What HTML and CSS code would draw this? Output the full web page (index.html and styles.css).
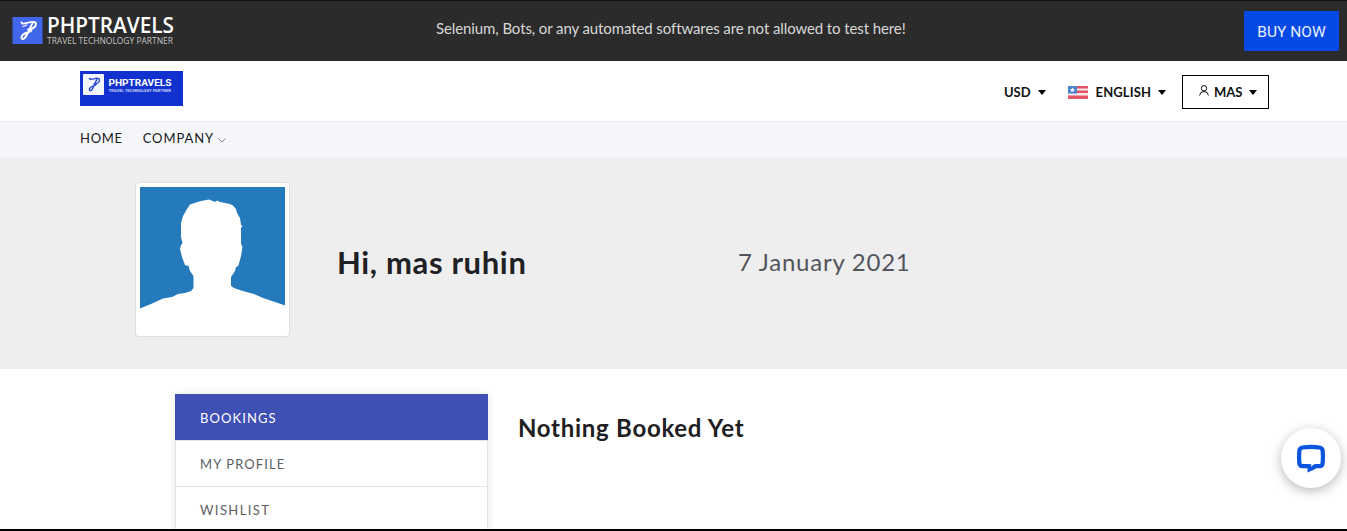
FILE: index.html
```html
<!DOCTYPE html>
<html lang="en">
<head>
<meta charset="utf-8">
<title>PHPTRAVELS - My Account</title>
<link rel="stylesheet" href="styles.css">
</head>
<body>
<div class="page">
  <div class="promo">
    <svg class="promo-logo" width="166" height="32" viewBox="0 0 166 32">
      <rect x="0.5" y="3" width="30" height="27" fill="#4267ec"/>
      <g fill="none" stroke="#fff" stroke-linecap="round" stroke-linejoin="round">
        <path stroke-width="1.900" d="M9.500 8.500C10 10.500 13 9.500 16 8.700C20 7.500 24 7.500 24 10C24 13 20 15.500 16 15.500"/>
        <path stroke-width="1.900" d="M20.500 9.500C18 13.500 17 17 15 20.500C13 24.500 11 26 9.800 24.500C8.500 22.500 11 20 14 19C17 18 18.500 18 19.500 16.500"/>
        <path stroke-width="1.200" d="M11 12.500L15 11"/>
      </g>
      <text class="logo-name" x="35" y="19" textLength="127" lengthAdjust="spacingAndGlyphs">PHPTRAVELS</text>
      <text class="logo-sub" x="35" y="29.500" textLength="126" lengthAdjust="spacingAndGlyphs">TRAVEL TECHNOLOGY PARTNER</text>
    </svg>
    <p class="promo-text">Selenium, Bots, or any automated softwares are not allowed to test here!</p>
    <a class="buy">BUY NOW</a>
  </div>

  <header class="header">
    <svg class="brand" width="103" height="35" viewBox="0 0 103 35">
      <rect width="103" height="35" fill="#1232cf"/>
      <rect x="3" y="3" width="21" height="21" rx="1" fill="#f3f6ff"/>
      <g fill="none" stroke="#2b49cc" stroke-width="1.400" stroke-linecap="round" stroke-linejoin="round">
        <path d="M9.500 7.500C10 9 12 8.300 14.500 7.700C17 7 19.700 7.200 19.500 9C19.300 11.200 17 12.800 14 12.900"/>
        <path d="M17 8.500C15 11.500 14.500 14 13.300 16.200C12 19 10.500 20.300 9.600 19.200C8.700 17.800 10.500 16 12.500 15.300C14.500 14.600 15.500 14.600 16 13.500"/>
      </g>
      <text class="brand-name" x="28.500" y="14.500" textLength="63" lengthAdjust="spacingAndGlyphs">PHPTRAVELS</text>
      <text class="brand-sub" x="28.500" y="20.500" textLength="62.500" lengthAdjust="spacingAndGlyphs">TRAVEL TECHNOLOGY PARTNER</text>
    </svg>
    <div class="tools">
      <a class="tool usd"><span>USD</span><i class="caret"></i></a>
      <a class="tool lang">
        <svg class="flag" width="20" height="13" viewBox="0 0 20 13">
          <rect width="20" height="13" rx="1" fill="#f7e7ea"/>
          <path fill="#e25563" d="M9 0h10a1 1 0 0 1 1 1v1.500H9zM9 4.500h11v2.500H9zM0 9.500h20v2.500a1 1 0 0 1-1 1H1a1 1 0 0 1-1-1z"/>
          <path fill="#4a83d0" d="M1 0h8v7.500H0V1a1 1 0 0 1 1-1z"/>
          <path fill="#fff" d="M4.500 1.500l.7 1.500 1.800.2-1.300 1.200.3 1.700-1.500-.8-1.500.8.3-1.700L2 3.200 3.800 3z"/>
        </svg>
        <span>ENGLISH</span><i class="caret"></i>
      </a>
      <a class="tool account">
        <svg width="10" height="11" viewBox="0 0 10 11" fill="none" stroke="#111"><circle cx="5" cy="3.300" r="2.700"/><path d="M.6 10.500Q.8 6.500 5 6.500T9.400 10.500"/></svg>
        <span>MAS</span><i class="caret"></i>
      </a>
    </div>
  </header>

  <nav class="nav">
    <a class="nav-home">HOME</a>
    <a class="nav-company">COMPANY</a>
    <svg class="chevron" width="8" height="5" viewBox="0 0 8 5" fill="none" stroke="#888"><path d="M.5.5L4 4 7.500.5"/></svg>
  </nav>

  <section class="hero">
    <div class="avatar">
      <svg width="145" height="145" viewBox="0 0 145 145">
        <rect width="145" height="145" fill="#257abc"/>
        <path fill="#fff" d="M0 145V121.500L11 117 23 111.500 32 110 38 107 45 106 51 104 53.500 101V89L50 84 48.500 79 45 78 42 70 40 62 41 58 42.500 56.500 41 50V36L43 29 47 22 50 17.500 56 15.500 61 14 69 12.500 75 15 77 13.500 80 15 90 17 93 18.500 96 22 97 26 100 31 101 38 102.500 39 101 41V57L102.500 60 101 69 98.500 78.500 96 80 95 84 91 90V99L94 101 101 103.500 114 107 123 111 135 115 145 118.500V145z"/>
      </svg>
    </div>
    <h1 class="greeting">Hi, mas ruhin</h1>
    <p class="date">7 January 2021</p>
  </section>

  <main class="main">
    <div class="menu">
      <a class="item active"><span class="bookings">BOOKINGS</span></a>
      <a class="item"><span class="profile">MY PROFILE</span></a>
      <a class="item"><span class="wishlist">WISHLIST</span></a>
    </div>
    <h2 class="empty">Nothing Booked Yet</h2>
  </main>

  <div class="chat">
    <svg width="30" height="30" viewBox="0 0 30 30"><path fill="none" stroke="#0b55de" stroke-width="4.200" d="M13.500 23.200H6.800Q3.500 23 3.300 20Q2.800 14 3.300 8Q3.500 5 6.500 4.500Q15 3.300 23.500 4.500Q26.500 5 26.700 8Q27.200 14 26.700 20Q26.500 23 23.500 23.200H18.500"/><path fill="#0b55de" d="M11.500 21.200V29.500Q17.500 27.500 20 25.200V21.200H18.500Q16 22.500 15.300 24V21.200z"/></svg>
  </div>
</div>
</body>
</html>
```
FILE: styles.css
```css
* { box-sizing: border-box; }
body { margin: 0; font-family: Lato, sans-serif; color: #1f2023; }
h1, h2, p { margin: 0; white-space: nowrap; }
.page { position: relative; height: 531px; overflow: hidden; background: #fff; border-bottom: 2px solid #000; display: flex; flex-direction: column; }

.promo { flex: none; height: 61px; background: #2b2b2b; border-top: 1px solid #151515; display: flex; align-items: flex-start; padding: 10px 8px 0 12px; }
.promo-logo { margin-top: 3px; flex: none; overflow: visible; }
.logo-name { font: 600 21.5px "Open Sans", sans-serif; fill: #fff; }
.logo-sub { font: 400 8.5px "Open Sans", sans-serif; fill: #c4c4c4; }
.promo-text { margin-left: 258px; font-size: 15px; line-height: 35px; letter-spacing: -0.1px; color: #d8d8d8; }
.buy { margin-left: auto; width: 95px; height: 40px; background: #064ae6; color: #e9efff; font: 400 15.5px/42px Roboto, sans-serif; text-align: center; }

.header { flex: none; height: 60px; display: flex; justify-content: space-between; padding: 10px 78px 0 80px; }
.brand { flex: none; }
.brand-name { font: 700 9.5px Roboto, sans-serif; fill: #fff; }
.brand-sub { font: 700 4.2px Roboto, sans-serif; fill: #c9d3ff; }
.tools { display: flex; align-items: center; height: 34px; margin-top: 4px; }
.tool { display: flex; align-items: center; font-size: 13px; font-weight: 700; line-height: 20px; color: #111; white-space: nowrap; }
.caret { width: 0; height: 0; border: 4px solid transparent; border-top: 5px solid #000; border-bottom: 0; margin-left: 7px; }
.usd { margin-right: 22px; }
.lang { margin-right: 16px; letter-spacing: 0.1px; }
.flag { margin-right: 8px; }
.account { width: 87px; height: 34px; border: 1px solid #000; padding-left: 16px; }
.account svg { margin: 0 5px 3px 0; }

.nav { flex: none; height: 36px; background: #f4f6f9; border-top: 1px solid #e8eaed; display: flex; align-items: center; padding: 0 0 3px 80px; font-size: 13px; letter-spacing: 0.9px; color: #17181c; }
.nav-home { letter-spacing: 0.7px; }
.nav-company { margin-left: 20px; }
.chevron { margin: 5px 0 0 4px; }

.hero { flex: none; height: 212px; background: #eee; display: flex; padding-left: 135px; }
.avatar { width: 155px; height: 155px; margin-top: 25px; padding: 4px; background: #fff; border: 1px solid #dedede; border-radius: 4px; flex: none; }
.avatar svg { display: block; }
.greeting { width: 400px; margin: 85px 0 0 47px; font-size: 31px; line-height: 40px; font-weight: 700; letter-spacing: 0.65px; }
.date { margin: 85px 0 0 1px; font-size: 24px; line-height: 40px; letter-spacing: 0.75px; color: #53555c; }

.main { display: flex; align-items: flex-start; padding: 25px 0 0 175px; }
.menu { width: 313px; box-shadow: 0 0 8px rgba(0,0,0,.1); }
.item { display: block; height: 46px; padding-left: 24px; border: 1px solid #e2e3e8; border-bottom: 0; font-size: 13px; line-height: 46px; letter-spacing: 1.1px; color: #5c5e65; background: #fff; }
.item.active { background: #3f50b5; border-color: #3f50b5; color: #fff; }
.wishlist { letter-spacing: 1.4px; }
.empty { margin: 14px 0 0 30px; font-size: 24px; line-height: 40px; font-weight: 700; letter-spacing: 0.72px; }

.chat { position: absolute; right: 6px; top: 428px; width: 60px; height: 60px; border-radius: 50%; background: #fff; box-shadow: 0 3px 12px rgba(0,0,0,.28); display: flex; align-items: center; justify-content: center; }
```
